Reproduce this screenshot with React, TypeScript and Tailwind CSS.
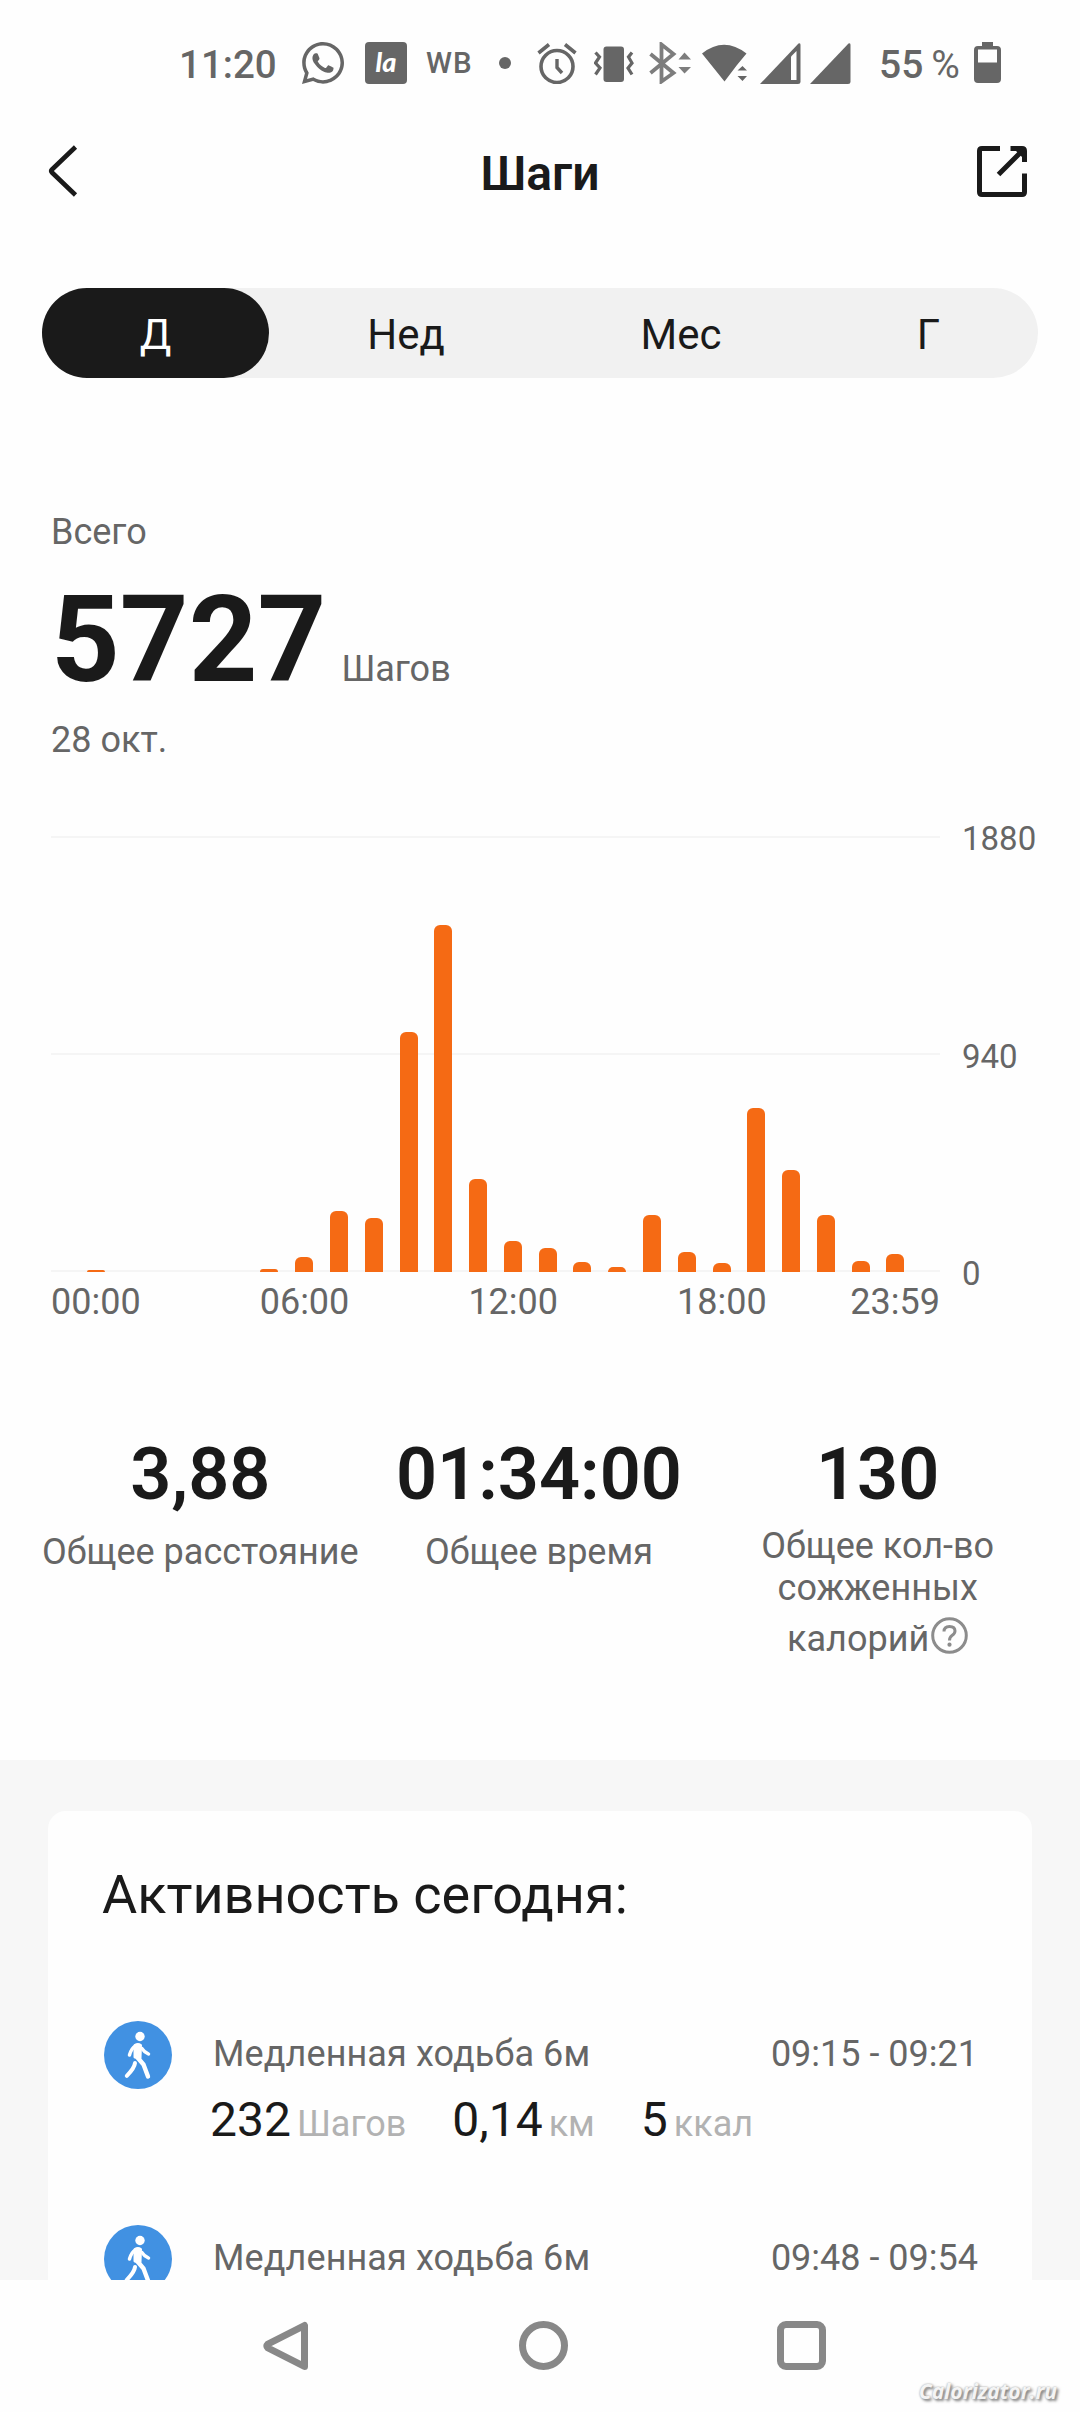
import React, { useState } from "react";
import { FaWhatsapp } from "react-icons/fa";

const MAX_STEPS = 1880;

const hourlySteps = [
  9, 0, 0, 0, 0, 13, 63, 262, 235, 1038, 1497, 402, 132, 104, 45, 22, 244, 85, 40, 706, 439, 248, 46, 77,
];

const tabs = [
  { id: "day", label: "Д", width: "w-[227px]" },
  { id: "week", label: "Нед", width: "w-[274px]" },
  { id: "month", label: "Мес", width: "w-[276px]" },
  { id: "year", label: "Г", width: "w-[219px]" },
];

const activities = [
  {
    id: 1,
    title: "Медленная ходьба 6м",
    time: "09:15 - 09:21",
    metrics: [
      { value: "232", unit: "Шагов" },
      { value: "0,14", unit: "км" },
      { value: "5", unit: "ккал" },
    ],
  },
  { id: 2, title: "Медленная ходьба 6м", time: "09:48 - 09:54", metrics: [] },
];

const StatusBar: React.FC = () => (
  <div className="h-[126px] shrink-0 flex items-start pt-[42px] pl-[179px] text-[#666666]">
    <span className="w-[123px] pt-[2px] text-[38.5px] leading-[42px] font-medium whitespace-nowrap">11:20</span>
    <FaWhatsapp className="w-[48px] h-[48px] -ml-[3px] -mt-[3px] shrink-0" />
    <span className="ml-[18px] w-[42px] h-[42px] shrink-0 rounded-[4px] bg-[#666666] text-white text-[27px] leading-[39px] font-black italic text-center font-[Lato,sans-serif]">
      la
    </span>
    <span className="ml-[19px] w-[73px] text-[29.5px] leading-[42px] font-medium tracking-[1px]">WB</span>
    <span className="mt-[15px] w-[12px] h-[12px] rounded-full bg-[#666666] shrink-0" />
    {/* Alarm */}
    <svg className="ml-[26px] w-[40px] h-[42px] shrink-0" viewBox="0 0 40 42" fill="none" stroke="currentColor">
      <circle cx="20" cy="24.5" r="16" strokeWidth="3.6" />
      <path d="M1.5 11 L12 2.5 M28 2.5 L38.5 11" strokeWidth="3.6" />
      <path d="M20 17 V25.5 L25 31" strokeWidth="3.4" />
    </svg>
    {/* Vibration */}
    <svg className="ml-[17px] w-[40px] h-[42px] shrink-0" viewBox="0 0 40 42" fill="none" stroke="currentColor">
      <rect x="9.5" y="4.5" width="20.500" height="35.5" rx="3" fill="currentColor" stroke="none" />
      <path d="M1.5 10.5 L5.5 15 L1.5 21 L6 26 L1.5 32.5 M38 10.5 L34.5 15 L38 21 L34 26 L38 32.5" strokeWidth="3.2" />
    </svg>
    {/* Bluetooth */}
    <svg className="ml-[15px] w-[44px] h-[42px] shrink-0" viewBox="0 0 44 42" fill="none" stroke="#7d7d7d">
      <path d="M1.5 12 L24.5 31 L12.5 39.5 V2.5 L24.5 12 L1.5 31" strokeWidth="3.8" />
      <path d="M29.5 17.5 L35.5 10.5 L42 17.5 Z M29.5 25 L35.5 31.5 L42 25 Z" fill="#7d7d7d" stroke="none" />
    </svg>
    {/* Wi-Fi */}
    <svg className="ml-[9px] w-[46px] h-[42px] shrink-0" viewBox="0 0 46 42" fill="currentColor">
      <path d="M0 11.5 Q22 -6 44.5 11.5 L35 23 L22.5 39.5 Z" />
      <path d="M34 25 L40.5 18 L47 25 V38 H30 Z" fill="#fefefe" />
      <path d="M35.5 28.5 L40.5 24 L45 28.5 Z M35.5 34 L40.5 39 L45 34 Z" />
    </svg>
    {/* SIM signals */}
    <svg className="ml-[12px] w-[41px] h-[42px] shrink-0" viewBox="0 0 41 42" fill="currentColor">
      <path d="M0 42 L38.5 1.5 Q40.5 0.5 40.5 3 V40 Q40.5 42 38 42 Z" />
      <path d="M31 14.5 L36.5 9 V38 H31 Z" fill="#fefefe" />
    </svg>
    <svg className="ml-[9px] w-[41px] h-[42px] shrink-0" viewBox="0 0 41 42" fill="currentColor">
      <path d="M0 42 L38.5 1.5 Q40.5 0.5 40.5 3 V40 Q40.5 42 38 42 Z" />
    </svg>
    <span className="ml-[28px] w-[95px] pt-[2px] text-[39px] leading-[42px] whitespace-nowrap">
      <span className="font-medium">55</span>
      <span className="ml-[8px]">%</span>
    </span>
    {/* Battery */}
    <svg className="w-[27px] h-[42px] shrink-0" viewBox="0 0 27 42" fill="currentColor">
      <path d="M8 0 H19 V4 H23 Q27 4 27 8 V37 Q27 41 23 41 H4 Q0 41 0 37 V8 Q0 4 4 4 H8 Z" />
      <rect x="4" y="7.5" width="19" height="13" fill="#fefefe" />
    </svg>
  </div>
);

const Header: React.FC = () => (
  <div className="h-[90px] shrink-0 flex items-center justify-between pl-[48px] pr-[52px]">
    <svg className="w-[52px] h-[52px]" viewBox="0 0 52 52" fill="none" stroke="#1a1a1a" strokeWidth="4.6">
      <path d="M27.5 2 L4 24.5 Q2.5 26 4 27.5 L27.5 50" />
    </svg>
    <h1 className="mt-[5px] ml-[4px] text-[48px] leading-[56px] font-semibold">Шаги</h1>
    <svg className="w-[52px] h-[52px]" viewBox="0 0 52 52" fill="none" stroke="#1a1a1a" strokeWidth="5">
      <path d="M24 3.5 H6 Q3.5 3.5 3.5 6 V47 Q3.5 49.5 6 49.5 H46 Q48.5 49.5 48.5 47 V28.5" />
      <path d="M34.5 3.5 H46 Q48.5 3.5 48.5 6 V17 M47 5 L22.5 29.5" />
      <path d="M39 5 H48 V14 Z" fill="#1a1a1a" stroke="none" />
    </svg>
  </div>
);

const StepsChart: React.FC = () => (
  <div className="mt-[75px] flex pl-[51px]">
    <div className="w-[889px] shrink-0">
      <div className="relative h-[436px] flex flex-col justify-between">
        <div className="h-[2px] bg-[#f5f5f5]" />
        <div className="h-[2px] bg-[#f5f5f5]" />
        <div className="h-[2px] bg-[#f5f5f5]" />
        {/* Bars lie over the grid lines */}
        <div className="absolute inset-0 flex items-end justify-between pl-[35.5px] pr-[35.5px]">
          {hourlySteps.map((steps, hour) => (
            <div
              key={hour}
              className="w-[18px] rounded-t-[6px] bg-[#f56a14]"
              style={{ height: `${(steps / MAX_STEPS) * 435.5}px` }}
            />
          ))}
        </div>
      </div>
      <div className="mt-[9px] flex text-[36px] leading-[42px] text-[#666666]">
        <span className="w-[208.7px]">00:00</span>
        <span className="w-[208.7px]">06:00</span>
        <span className="w-[208.7px]">12:00</span>
        <span>18:00</span>
        <span className="ml-auto">23:59</span>
      </div>
    </div>
    <div className="-mt-[17px] ml-[22px] h-[475px] flex flex-col justify-between text-[33px] leading-[40px] text-[#666666]">
      <span>1880</span>
      <span>940</span>
      <span>0</span>
    </div>
  </div>
);

const HelpIcon: React.FC = () => (
  <svg className="w-[37px] h-[37px] -mt-[8px]" viewBox="0 0 37 37" fill="none" stroke="#8c8c8c">
    <circle cx="18.5" cy="18.5" r="16.8" strokeWidth="3" />
    <path d="M13 14.5 Q13 9.5 18.5 9.5 Q24 9.5 24 14 Q24 16.5 21 18.5 Q18.5 20.3 18.5 23.5" strokeWidth="3" />
    <circle cx="18.5" cy="27.7" r="2.1" fill="#8c8c8c" stroke="none" />
  </svg>
);

const Summary: React.FC = () => (
  <div className="mt-[110px] h-[327px] shrink-0 grid grid-cols-3 pl-[31px] pr-[33px] text-center text-[36px] leading-[42px] text-[#666666]">
    <div>
      <div className="text-[72px] leading-[84px] font-semibold text-[#1a1a1a]">3,88</div>
      <div className="mt-[14px] whitespace-nowrap">Общее расстояние</div>
    </div>
    <div>
      <div className="text-[72px] leading-[84px] font-semibold text-[#1a1a1a]">01:34:00</div>
      <div className="mt-[14px]">Общее время</div>
    </div>
    <div>
      <div className="text-[72px] leading-[84px] font-semibold text-[#1a1a1a]">130</div>
      <div className="mt-[8px]">Общее кол-во</div>
      <div>сожженных</div>
      <div className="mt-[9px] flex items-center justify-center gap-[2px]">
        калорий
        <HelpIcon />
      </div>
    </div>
  </div>
);

const WalkIcon: React.FC = () => (
  <svg className="w-[68px] h-[68px] shrink-0" viewBox="0 0 68 68" fill="none" stroke="white" strokeLinecap="round" strokeLinejoin="round">
    <circle cx="34" cy="34" r="34" fill="#4191e2" stroke="none" />
    <circle cx="36" cy="15.5" r="4.7" fill="white" stroke="none" />
    <path d="M31 24.5 Q34 22.5 36.5 24.5 L36 37 L31 36 Z" fill="white" strokeWidth="3" />
    <path d="M31.5 25 Q27.5 27 25.5 34" strokeWidth="3.5" />
    <path d="M38 27.5 Q40 31 44.5 33" strokeWidth="3.5" />
    <path d="M33.5 36.5 L39.5 43.5 L44 55.5" strokeWidth="4.4" />
    <path d="M31 42 Q30.5 47 22.8 54.8" strokeWidth="4" />
  </svg>
);

const Metric: React.FC<{ value: string; unit: string }> = ({ value, unit }) => (
  <div className="flex items-baseline gap-[6px]">
    <span className="text-[48px] leading-[56px] text-[#1a1a1a]">{value}</span>
    <span className="text-[36px] leading-[42px] text-[#b2b2b2]">{unit}</span>
  </div>
);

const NavBar: React.FC = () => (
  <div className="relative h-[132px] shrink-0 bg-[#fefefe] flex items-start pt-[41px] pl-[262px]">
    <svg className="w-[50px] h-[50px]" viewBox="0 0 50 50" fill="none" stroke="#888888" strokeWidth="7" strokeLinejoin="round">
      <path d="M42.5 4.5 V45.5 L6 27 Q4 25 6 23 Z" />
    </svg>
    <span className="ml-[207px] w-[49px] h-[49px] rounded-full border-[7px] border-[#888888]" />
    <span className="ml-[209px] w-[49px] h-[49px] rounded-[9px] border-[7px] border-[#888888]" />
    <span className="absolute right-[23px] bottom-[8px] text-[21px] leading-[26px] font-bold italic text-[#f4f4f4] font-[Open_Sans,sans-serif] [text-shadow:0_0_2px_#999,2px_2px_3px_#777]">
      Calorizator.ru
    </span>
  </div>
);

const App: React.FC = () => {
  const [activeTab, setActiveTab] = useState("day");

  return (
    <div className="w-[1080px] h-[2412px] flex flex-col overflow-hidden bg-[#fefefe] text-[#1a1a1a] font-[Roboto,sans-serif]">
      <StatusBar />
      <Header />

      {/* Period tabs */}
      <div className="mt-[72px] mx-[42px] h-[90px] shrink-0 flex rounded-full bg-[#f1f1f1]">
        {tabs.map((tab) => (
          <button
            key={tab.id}
            onClick={() => setActiveTab(tab.id)}
            className={`${tab.width} h-full rounded-full pt-[3px] text-[42px] leading-[50px] ${
              activeTab === tab.id ? "bg-[#1a1a1a] text-white" : "text-[#1a1a1a]"
            }`}
          >
            {tab.label}
          </button>
        ))}
      </div>

      {/* Daily total */}
      <div className="mt-[133px] pl-[51px] text-[36px] leading-[42px] text-[#666666]">
        <div>Всего</div>
        <div className="mt-[17px] flex items-baseline gap-[15px]">
          <span className="text-[120px] leading-[140px] font-bold text-[#1a1a1a]">5727</span>
          <span>Шагов</span>
        </div>
        <div className="mt-[9px]">28 окт.</div>
      </div>

      <StepsChart />
      <Summary />

      {/* Activity list */}
      <div className="flex-1 min-h-0 overflow-hidden bg-[#f7f7f7] px-[48px] pt-[51px]">
        <div className="h-[600px] rounded-[18px] bg-[#fefefe] px-[54px] pt-[52px]">
          <h2 className="text-[54px] leading-[64px]">Активность сегодня:</h2>
          <div className="mt-[94px]">
            {activities.map((activity) => (
              <div key={activity.id} className="flex h-[204px] pl-[2px]">
                <WalkIcon />
                <div className="ml-[38px] flex-1 pt-[12px]">
                  <div className="flex justify-between pl-[3px] text-[36px] leading-[42px] text-[#666666]">
                    <span className="tracking-[0.1px]">{activity.title}</span>
                    <span>{activity.time}</span>
                  </div>
                  <div className="mt-[17px] flex gap-[46px]">
                    {activity.metrics.map((metric) => (
                      <Metric key={metric.unit} value={metric.value} unit={metric.unit} />
                    ))}
                  </div>
                </div>
              </div>
            ))}
          </div>
        </div>
      </div>

      <NavBar />
    </div>
  );
};

export default App;
